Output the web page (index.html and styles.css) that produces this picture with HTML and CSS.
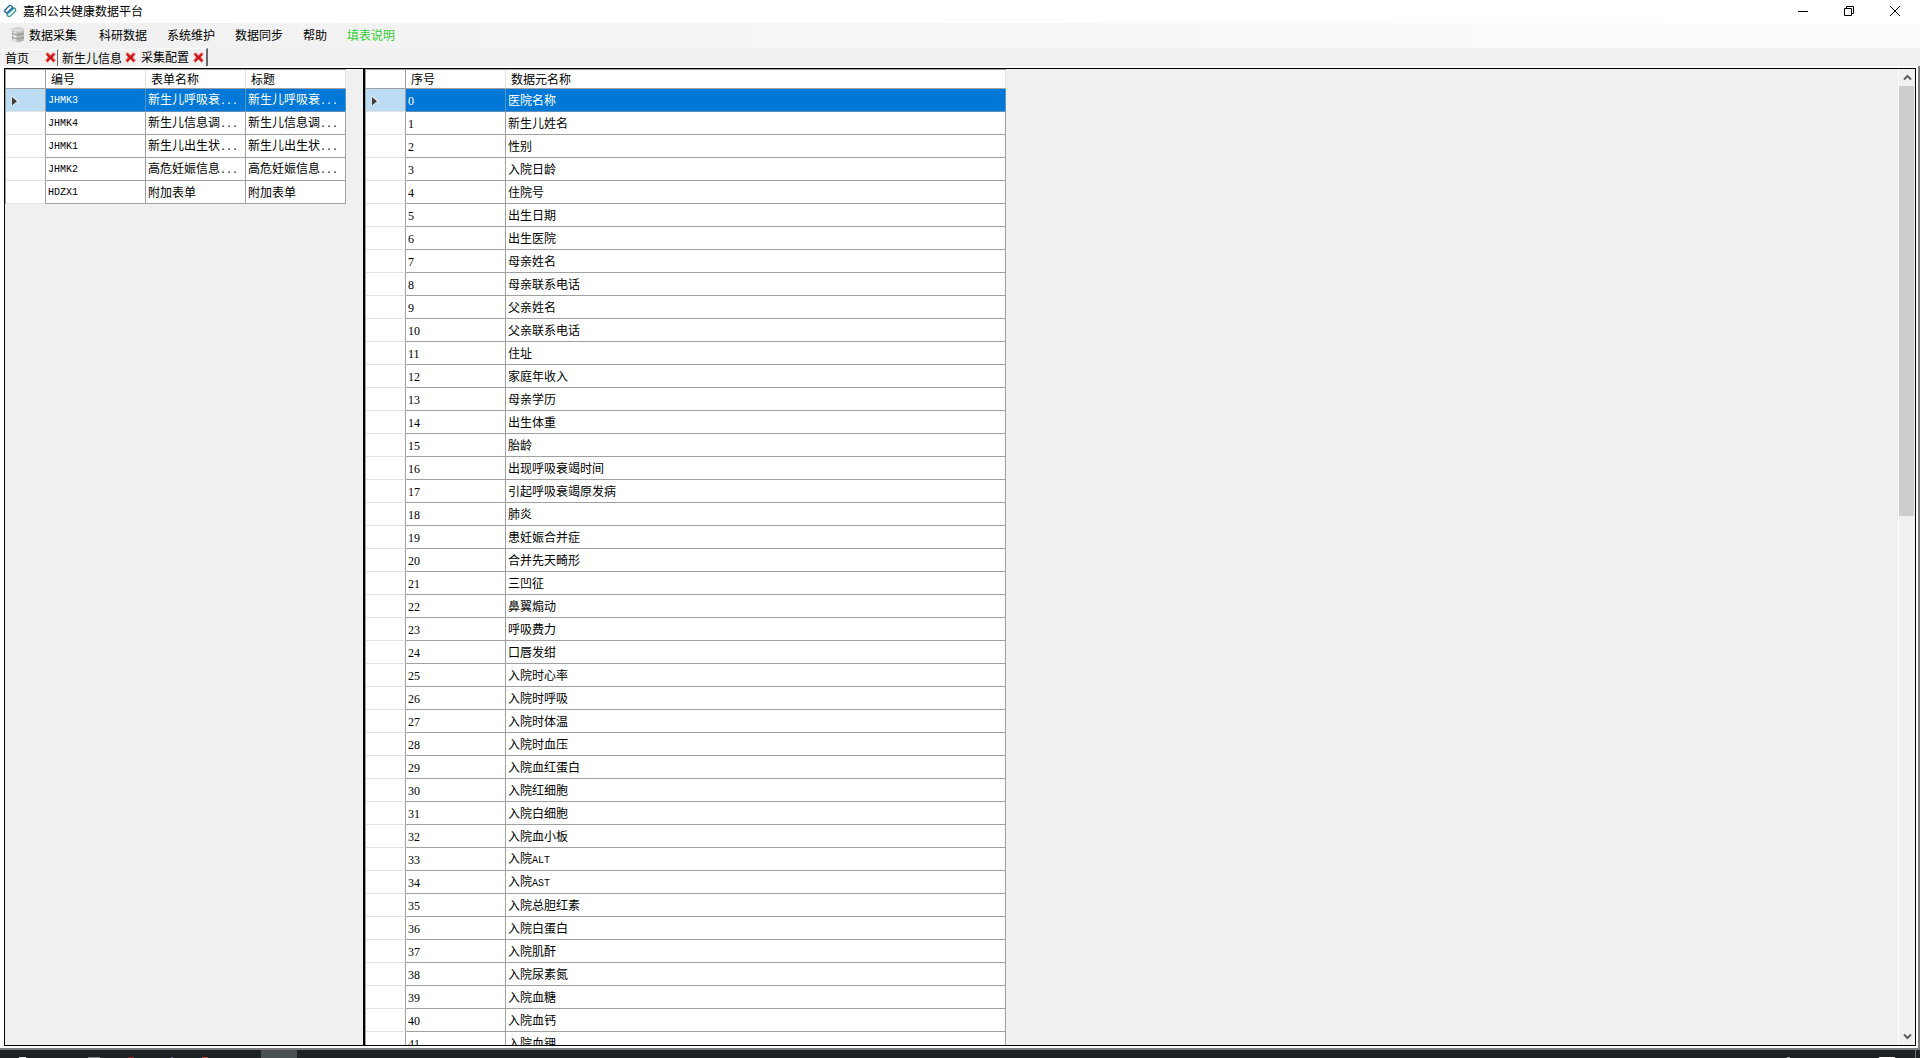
FILE: index.html
```html
<!DOCTYPE html>
<html lang="zh-CN">
<head>
<meta charset="utf-8">
<title>嘉和公共健康数据平台</title>
<link rel="stylesheet" href="styles.css">
</head>
<body>
<svg class="defs" width="0" height="0" aria-hidden="true">
  <symbol id="cross" viewBox="0 0 11 11">
    <path d="M.5 2 2.500.5 5.500 3 8.500.5 10.500 2 8 5 10.500 8.500 8.500 10.500 5.500 7.500 2.500 10.500.5 8.500 3 5Z" fill="#e04040" stroke="#eda0a0" stroke-width=".8"/>
    <path d="M2 2.500 9 9M9 2.500 2 9" stroke="#c40f14" stroke-width="1.300"/>
  </symbol>
  <symbol id="pointer" viewBox="0 0 8 12">
    <path d="M.5.5V11.500L7.500 6Z" fill="#f6f6f6"/>
    <path d="M1 2V10.500L6 6.200Z" fill="#3c3c3c"/>
  </symbol>
</svg>
<header class="titlebar">
  <svg class="logo" width="14" height="14" viewBox="0 0 14 14" fill="none" stroke-width="1.400" stroke-linejoin="round">
    <path d="M1.500 6.500 6.500 1.500Q9 1 9.500 3.500L4.500 8.500Q2 9 1.500 6.500Z" stroke="#23609a"/>
    <path d="M4 10.500 11 4Q13 4.500 12.500 7L7 12.300Q4.500 13 4 10.500Z" stroke="#3f9f9b"/>
    <path d="M3.500 10 10.500 3.500" stroke="#2b7eaa"/>
  </svg>
  <h1>嘉和公共健康数据平台</h1>
  <div class="controls">
    <button aria-label="最小化"><svg width="10" height="10" viewBox="0 0 10 10"><path d="M0 5.500H10" stroke="#000"/></svg></button>
    <button aria-label="还原"><svg width="10" height="10" viewBox="0 0 10 10"><path d="M.5 2.500H7.500V9.500H.5ZM2.500 2.500V.5H9.500V7.500H7.500" fill="none" stroke="#000"/></svg></button>
    <button aria-label="关闭"><svg width="10" height="10" viewBox="0 0 10 10"><path d="M0 0 10 10M10 0 0 10" stroke="#000"/></svg></button>
  </div>
</header>
<nav class="menubar">
  <button class="lead"><svg width="14" height="16" viewBox="0 0 14 16">
    <path d="M1 3V13.500Q7 17 13 13.500V3Z" fill="#b9bab8"/>
    <path d="M2 3V14Q4 15 5.500 15V3Z" fill="#e4e4e2"/>
    <ellipse cx="7" cy="3" rx="6" ry="2.200" fill="#dcdddb" stroke="#b3b4b2" stroke-width=".6"/>
    <path d="M1 6.500Q7 9.500 13 6.500M1 10.500Q7 13.500 13 10.500" fill="none" stroke="#8d8f8d"/>
  </svg>数据采集</button>
  <button>科研数据</button>
  <button>系统维护</button>
  <button>数据同步</button>
  <button>帮助</button>
  <button class="hint">填表说明</button>
</nav>
<div class="tabs">
  <div class="tab home"><button>首页</button><button class="x" aria-label="关闭首页"><svg width="11" height="11"><use href="#cross"/></svg></button></div>
  <div class="tab info"><button>新生儿信息</button><button class="x" aria-label="关闭新生儿信息"><svg width="11" height="11"><use href="#cross"/></svg></button></div>
  <div class="tab active"><button>采集配置</button><button class="x" aria-label="关闭采集配置"><svg width="11" height="11"><use href="#cross"/></svg></button></div>
</div>
<main class="frame">
  <div class="split">
    <section class="forms">
      <table class="grid">
        <colgroup><col class="c-head"><col class="c-std"><col class="c-std"><col class="c-std"></colgroup>
        <thead><tr><th></th><th>编号</th><th>表单名称</th><th>标题</th></tr></thead>
        <tbody>
          <tr class="selected"><th><svg width="8" height="12"><use href="#pointer"/></svg></th><td class="code">JHMK3</td><td>新生儿呼吸衰<span class="code">...</span></td><td>新生儿呼吸衰<span class="code">...</span></td></tr>
          <tr><th></th><td class="code">JHMK4</td><td>新生儿信息调<span class="code">...</span></td><td>新生儿信息调<span class="code">...</span></td></tr>
          <tr><th></th><td class="code">JHMK1</td><td>新生儿出生状<span class="code">...</span></td><td>新生儿出生状<span class="code">...</span></td></tr>
          <tr><th></th><td class="code">JHMK2</td><td>高危妊娠信息<span class="code">...</span></td><td>高危妊娠信息<span class="code">...</span></td></tr>
          <tr><th></th><td class="code">HDZX1</td><td>附加表单</td><td>附加表单</td></tr>
        </tbody>
      </table>
    </section>
    <section class="elements">
      <table class="grid">
        <colgroup><col class="c-head"><col class="c-std"><col class="c-wide"></colgroup>
        <thead><tr><th></th><th>序号</th><th>数据元名称</th></tr></thead>
        <tbody>
          <tr class="selected"><th><svg width="8" height="12"><use href="#pointer"/></svg></th><td>0</td><td>医院名称</td></tr>
          <tr><th></th><td>1</td><td>新生儿姓名</td></tr>
          <tr><th></th><td>2</td><td>性别</td></tr>
          <tr><th></th><td>3</td><td>入院日龄</td></tr>
          <tr><th></th><td>4</td><td>住院号</td></tr>
          <tr><th></th><td>5</td><td>出生日期</td></tr>
          <tr><th></th><td>6</td><td>出生医院</td></tr>
          <tr><th></th><td>7</td><td>母亲姓名</td></tr>
          <tr><th></th><td>8</td><td>母亲联系电话</td></tr>
          <tr><th></th><td>9</td><td>父亲姓名</td></tr>
          <tr><th></th><td>10</td><td>父亲联系电话</td></tr>
          <tr><th></th><td>11</td><td>住址</td></tr>
          <tr><th></th><td>12</td><td>家庭年收入</td></tr>
          <tr><th></th><td>13</td><td>母亲学历</td></tr>
          <tr><th></th><td>14</td><td>出生体重</td></tr>
          <tr><th></th><td>15</td><td>胎龄</td></tr>
          <tr><th></th><td>16</td><td>出现呼吸衰竭时间</td></tr>
          <tr><th></th><td>17</td><td>引起呼吸衰竭原发病</td></tr>
          <tr><th></th><td>18</td><td>肺炎</td></tr>
          <tr><th></th><td>19</td><td>患妊娠合并症</td></tr>
          <tr><th></th><td>20</td><td>合并先天畸形</td></tr>
          <tr><th></th><td>21</td><td>三凹征</td></tr>
          <tr><th></th><td>22</td><td>鼻翼煽动</td></tr>
          <tr><th></th><td>23</td><td>呼吸费力</td></tr>
          <tr><th></th><td>24</td><td>口唇发绀</td></tr>
          <tr><th></th><td>25</td><td>入院时心率</td></tr>
          <tr><th></th><td>26</td><td>入院时呼吸</td></tr>
          <tr><th></th><td>27</td><td>入院时体温</td></tr>
          <tr><th></th><td>28</td><td>入院时血压</td></tr>
          <tr><th></th><td>29</td><td>入院血红蛋白</td></tr>
          <tr><th></th><td>30</td><td>入院红细胞</td></tr>
          <tr><th></th><td>31</td><td>入院白细胞</td></tr>
          <tr><th></th><td>32</td><td>入院血小板</td></tr>
          <tr><th></th><td>33</td><td>入院<span class="code">ALT</span></td></tr>
          <tr><th></th><td>34</td><td>入院<span class="code">AST</span></td></tr>
          <tr><th></th><td>35</td><td>入院总胆红素</td></tr>
          <tr><th></th><td>36</td><td>入院白蛋白</td></tr>
          <tr><th></th><td>37</td><td>入院肌酐</td></tr>
          <tr><th></th><td>38</td><td>入院尿素氮</td></tr>
          <tr><th></th><td>39</td><td>入院血糖</td></tr>
          <tr><th></th><td>40</td><td>入院血钙</td></tr>
          <tr><th></th><td>41</td><td>入院血钾</td></tr>
        </tbody>
      </table>
    </section>
    <div class="scrollbar">
      <button aria-label="向上滚动"><svg width="9" height="7" viewBox="0 0 9 7"><path d="M1 5.500 4.500 2 8 5.500" fill="none" stroke="#606060" stroke-width="2"/></svg></button>
      <div class="track"><div class="thumb"></div></div>
      <button aria-label="向下滚动"><svg width="9" height="7" viewBox="0 0 9 7"><path d="M1 1.500 4.500 5 8 1.500" fill="none" stroke="#606060" stroke-width="2"/></svg></button>
    </div>
  </div>
</main>
<footer class="taskbar">
  <svg width="300" height="8" viewBox="0 0 300 8">
    <path d="M261 0H297V8H261Z" fill="#4a5153"/>
    <path d="M19 7H26V8H19Z" fill="#e8e8e8"/>
    <path d="M88 7H100V8H88Z" fill="#8d9294"/>
    <path d="M128 7H134V8H128Z" fill="#a01c28"/>
    <path d="M171 7H173V8H171Z" fill="#6a62a0"/>
    <path d="M202 7H208V8H202Z" fill="#c8453c"/>
  </svg>
  <svg width="140" height="8" viewBox="0 0 140 8">
    <path d="M7 7H10V8H7Z" fill="#aaa"/>
    <path d="M99 7H115V8H99Z" fill="#fff"/>
    <path d="M135 0H136V8H135Z" fill="#707173"/>
  </svg>
</footer>
</body>
</html>
```
FILE: styles.css
```css
* { box-sizing: border-box; }

body {
  margin: 0;
  height: 100vh;
  display: flex;
  flex-direction: column;
  overflow: hidden;
  background: #f0f0f0;
  color: #000;
  font: 12px/16px "Noto Sans CJK SC", sans-serif;
}

button {
  margin: 0;
  padding: 0;
  border: 0;
  background: none;
  color: inherit;
  font: inherit;
  white-space: nowrap;
}

svg { display: block; flex: none; }
.defs { position: absolute; }

/* Title bar */
.titlebar {
  flex: none;
  display: flex;
  align-items: center;
  height: 23px;
  padding: 0 2px 1px 3px;
  background: #fff;
}
.titlebar h1 { margin: 0 auto 0 6px; font-size: 12px; font-weight: 400; }
.controls { display: flex; height: 20px; }
.controls button { width: 46px; display: grid; place-items: center; }

/* Menu */
.menubar {
  flex: none;
  display: flex;
  align-items: center;
  gap: 20px;
  height: 25px;
  padding: 0 0 2px 11px;
  background: linear-gradient(to right, #f0f0f0, #fcfcfc 90%);
}
.menubar button { display: flex; align-items: center; gap: 4px; }
.menubar .lead { padding-right: 2px; }
.menubar .hint { color: #32cd32; }

/* Document tabs */
.tabs { flex: none; display: flex; align-items: flex-end; height: 18px; padding-left: 2px; }
.tab {
  display: flex;
  align-items: center;
  justify-content: space-between;
  height: 17px;
  padding: 0 2px 1px;
  border: 1px solid #fff;
  border-bottom: 0;
  border-right: 1px solid #696969;
}
.tab.home { width: 56px; padding-right: 1px; }
.tab.info { width: 79px; margin-left: 1px; border-right: 0; }
.tab.active { width: 70px; height: 18px; border-right-width: 2px; }

/* Framed work area */
.frame {
  flex: 1;
  min-height: 0;
  display: flex;
  border: 2px solid #fff;
  border-left-width: 4px;
  margin: 0 2px 2px 0;
  outline: 2px solid #7e7e7e;
  clip-path: inset(0 -2px -2px 0);
}
.split { flex: 1; min-width: 0; display: flex; border: 1px solid #000; overflow: hidden; }
.forms { flex: none; width: 360px; border-right: 2px solid #000; }
.elements { flex: 1; min-width: 0; overflow: hidden; }

/* Data grids */
.grid {
  table-layout: fixed;
  width: 0;
  border-spacing: 0;
  border-top: 1px solid #a0a0a0;
  border-left: 1px solid #a0a0a0;
  background: #fff;
  font-family: "Liberation Serif", "Noto Sans CJK SC", serif;
  white-space: nowrap;
}
.c-head { width: 40px; }
.c-std { width: 100px; }
.c-wide { width: 500px; }
.grid th, .grid td {
  height: 23px;
  padding: 2px 2px 0;
  border-right: 1px solid #a0a0a0;
  border-bottom: 1px solid #a0a0a0;
  font-weight: 400;
  line-height: 16px;
  text-align: left;
  overflow: hidden;
}
.grid thead th { height: 19px; padding: 2px 5px 0; border-right-color: #e3e3e3; }
.grid thead th:first-child { border-right-color: #a0a0a0; }
.grid tbody th { padding: 2px 5px 0; border-bottom-color: #e3e3e3; }
.grid .selected th { background: #bcdcf4; }
.grid .selected td { background: #0078d7; color: #fff; border-color: #5f93bd; }
.grid .code { font-family: "Liberation Mono", monospace; font-size: 10px; }

/* Scroll bar */
.scrollbar {
  flex: none;
  width: 17px;
  display: flex;
  flex-direction: column;
  border-left: 1px solid #fff;
}
.scrollbar button { flex: none; height: 17px; display: grid; place-items: center; }
.track { flex: 1; padding-right: 1px; }
.thumb { height: 45.6%; background: #cdcdcd; }

/* Desktop task bar */
.taskbar {
  flex: none;
  display: flex;
  justify-content: space-between;
  height: 8px;
  background: #1d2225;
}
```
